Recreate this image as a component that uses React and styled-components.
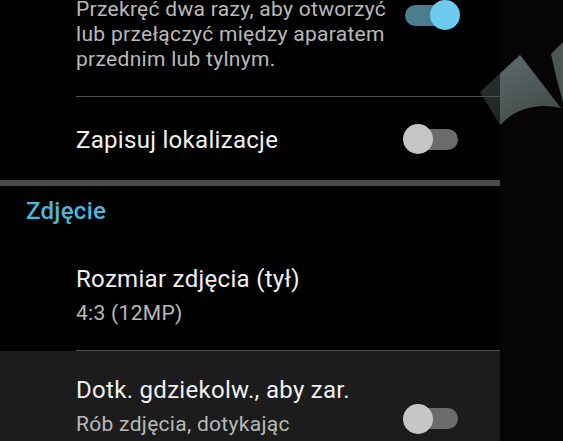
import React from "react";
import styled, { createGlobalStyle } from "styled-components";

const GlobalStyle = createGlobalStyle`
  html, body {
    margin: 0;
    padding: 0;
    background: #060405;
  }
  body {
    font-family: Roboto, "Noto Sans", "Liberation Sans", sans-serif;
    -webkit-font-smoothing: antialiased;
  }
`;

const Screen = styled.div`
  position: relative;
  width: 563px;
  height: 441px;
  overflow: hidden;
  background: #060405;
  display: flex;
  align-items: flex-start;
`;

const Backdrop = styled.svg`
  position: absolute;
  inset: 0;
  width: 563px;
  height: 441px;
  z-index: 0;
`;

const Panel = styled.div`
  position: relative;
  z-index: 1;
  width: 500px;
  margin-top: -3px;
  background: rgba(0, 0, 0, 0.55);
  display: flex;
  flex-direction: column;
`;

const PrefRow = styled.div`
  display: flex;
  align-items: center;
  padding: ${(p) => p.$pt}px 40px ${(p) => p.$pb}px 76px;
  background: ${(p) => (p.$active ? "#1c1c1c" : "transparent")};
`;

const TextBlock = styled.div`
  flex: 1;
  min-width: 0;
  margin-right: 6px;
  display: flex;
  flex-direction: column;
  gap: 7px;
`;

const Title = styled.div`
  font-size: 24px;
  line-height: 30px;
  letter-spacing: 0.3px;
  color: #f0f0f0;
  white-space: nowrap;
`;

const Summary = styled.div`
  font-size: 21px;
  line-height: 25px;
  letter-spacing: 0.3px;
  color: #b9b9b9;
`;

const Divider = styled.div`
  height: 1px;
  margin-left: 76px;
  background: #4f4f4f;
`;

const CategoryDivider = styled.div`
  height: 6px;
  background: #4b4b4b;
`;

const CategoryTitle = styled.div`
  padding: 10px 0 0 26px;
  font-size: 24px;
  line-height: 30px;
  letter-spacing: 0.3px;
  font-weight: 500;
  color: #4fb6da;
`;

const SwitchBox = styled.div`
  position: relative;
  flex: none;
  width: 58px;
  height: 30px;
  align-self: ${(p) => (p.$top ? "flex-start" : "center")};
  margin-top: ${(p) => p.$mt || 0}px;
`;

const Track = styled.div`
  position: absolute;
  left: 3px;
  right: 2px;
  top: 4.5px;
  height: 21px;
  border-radius: 10.5px;
  background: ${(p) => (p.$on ? "#4b7e8c" : "#6b6b6b")};
`;

const Thumb = styled.div`
  position: absolute;
  top: 0;
  ${(p) => (p.$on ? "right: 0;" : "left: 1px;")}
  width: 30px;
  height: 30px;
  border-radius: 50%;
  background: ${(p) => (p.$on ? "#6ccbee" : "#c6c6c6")};
`;

function Switch({ on, top, mt }) {
  return (
    <SwitchBox $top={top} $mt={mt}>
      <Track $on={on} />
      <Thumb $on={on} />
    </SwitchBox>
  );
}

export default function App() {
  return (
    <>
      <GlobalStyle />
      <Screen>
        <Backdrop viewBox="0 0 563 441">
          <defs>
            <linearGradient id="shard" x1="0" y1="0" x2="0.6" y2="1">
              <stop offset="0" stopColor="#627070" />
              <stop offset="1" stopColor="#414b49" />
            </linearGradient>
          </defs>
          <path d="M520 55 L480 92 L500 125 Q524 100 561 108 Z" fill="url(#shard)" />
          <path d="M551 54 L563 42 L563 102 Q557 82 551 54 Z" fill="#4b5553" />
        </Backdrop>
        <Panel>
          <PrefRow $pt={0} $pb={24}>
            <TextBlock>
              <Summary>
                Przekręć dwa razy, aby otworzyć lub przełączyć między aparatem
                przednim lub tylnym.
              </Summary>
            </TextBlock>
            <Switch on top mt={3} />
          </PrefRow>
          <Divider />
          <PrefRow $pt={28} $pb={25}>
            <TextBlock>
              <Title>Zapisuj lokalizacje</Title>
            </TextBlock>
            <Switch mt={-2} />
          </PrefRow>
          <CategoryDivider />
          <CategoryTitle>Zdjęcie</CategoryTitle>
          <PrefRow $pt={38} $pb={24}>
            <TextBlock>
              <Title>Rozmiar zdjęcia (tył)</Title>
              <Summary>4:3 (12MP)</Summary>
            </TextBlock>
          </PrefRow>
          <Divider />
          <PrefRow $pt={24} $pb={30} $active>
            <TextBlock>
              <Title>Dotk. gdziekolw., aby zar.</Title>
              <Summary>
                Rób zdjęcia, dotykając
                <br />
                dowolnego miejsca ekranu
              </Summary>
            </TextBlock>
            <Switch />
          </PrefRow>
        </Panel>
      </Screen>
    </>
  );
}
